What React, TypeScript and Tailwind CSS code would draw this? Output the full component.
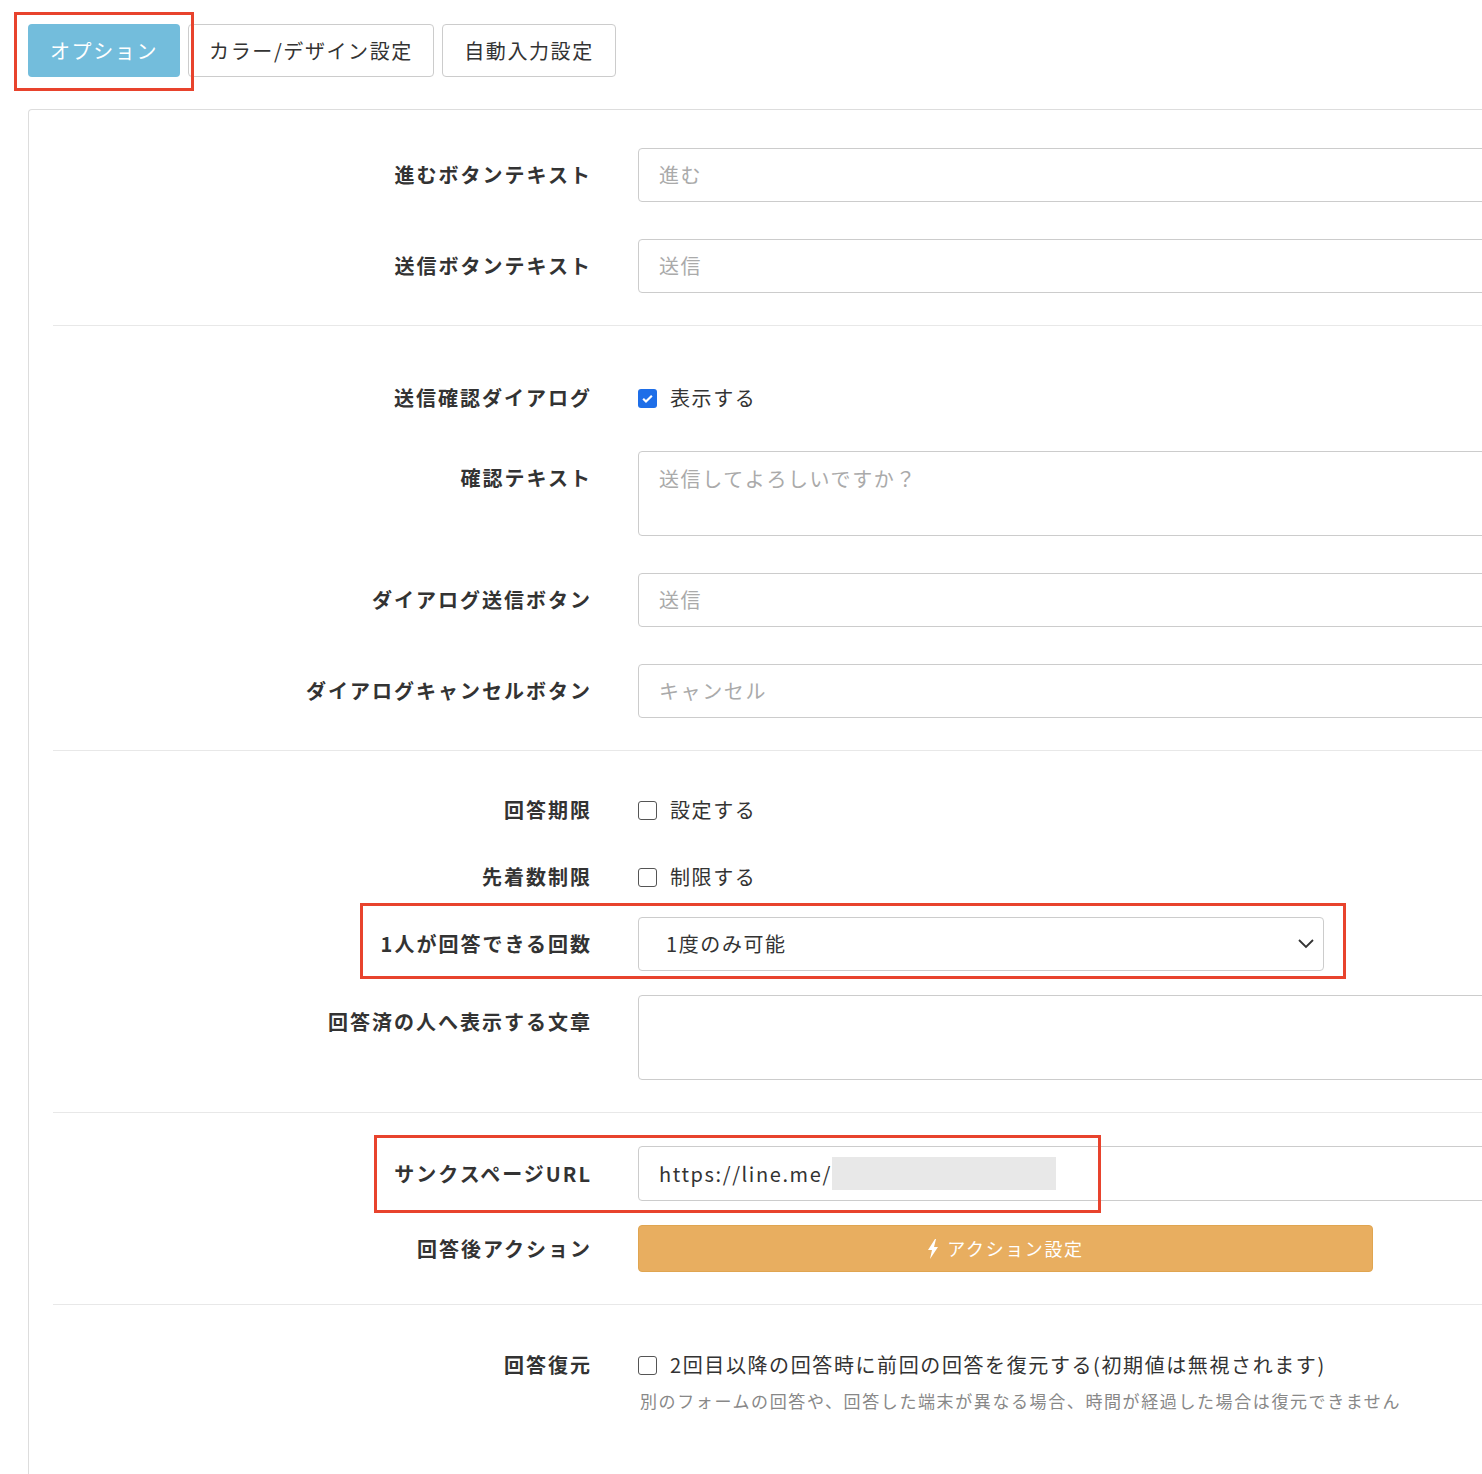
const F = { fontFamily: '"Noto Sans CJK JP", "Noto Sans", sans-serif', letterSpacing: '0.1em' };

function Label({ children, top }: { children: React.ReactNode; top?: boolean }) {
  return (
    <div className={`w-[539px] shrink-0 whitespace-nowrap text-right text-[20px] font-bold tracking-[0.1em] text-[#333] ${top ? 'self-start pt-[12px]' : ''}`} style={{ marginRight: '-0.1em' }}>
      {children}
    </div>
  );
}
function Input({ ph, h = 54, val }: { ph?: string; h?: number; val?: string }) {
  return (
    <div className="ml-[48px] flex-1 rounded-[4px] border border-[#ccc] bg-white px-[20px] text-[20px] text-[#aaa]" style={{ height: h, paddingTop: h > 60 ? 12 : 0, display: 'flex', alignItems: h > 60 ? 'flex-start' : 'center' }}>
      {val ?? ph}
    </div>
  );
}
function Box({ checked }: { checked?: boolean }) {
  return checked ? (
    <span className="flex h-[19px] w-[19px] items-center justify-center rounded-[3px] bg-[#1e6ee8]">
      <svg width="13" height="13" viewBox="0 0 12 12"><path d="M2 6.2l2.6 2.6L10 3.4" stroke="white" strokeWidth="2" fill="none" /></svg>
    </span>
  ) : (
    <span className="h-[19px] w-[19px] rounded-[3px] border-[1.5px] border-[#555] bg-white" />
  );
}
function CheckRow({ label, text, checked, mt }: { label: string; text: string; checked?: boolean; mt: number }) {
  return (
    <div className="flex h-[30px] items-center" style={{ marginTop: mt }}>
      <Label>{label}</Label>
      <div className="ml-[48px] flex items-center gap-[13px] whitespace-nowrap text-[20px] text-[#333]">
        <Box checked={checked} />
        {text}
      </div>
    </div>
  );
}
const Divider = ({ mt }: { mt: number }) => <div className="h-px bg-[#e8e8e8]" style={{ marginTop: mt }} />;

export default function App() {
  return (
    <div className="relative h-[1474px] w-[1482px] overflow-hidden bg-white" style={F}>
      <div className="flex gap-[8px] pl-[28px] pt-[24px]">
        <div className="flex h-[53px] w-[152px] items-center justify-center rounded-[4px] bg-[#73bddc] text-[20px] text-white">オプション</div>
        <div className="flex h-[53px] w-[246px] items-center justify-center rounded-[4px] border border-[#ccc] text-[20px] text-[#333]">カラー/デザイン設定</div>
        <div className="flex h-[53px] w-[174px] items-center justify-center rounded-[4px] border border-[#ccc] text-[20px] text-[#333]">自動入力設定</div>
      </div>
      <div className="ml-[28px] mt-[32px] h-[1400px] w-[1500px] rounded-tl-[4px] border-l border-t border-[#ddd] pl-[24px] pt-[38px]">
        <div className="flex items-center"><Label>進むボタンテキスト</Label><Input ph="進む" /></div>
        <div className="mt-[37px] flex items-center"><Label>送信ボタンテキスト</Label><Input ph="送信" /></div>
        <Divider mt={32} />
        <CheckRow mt={57} label="送信確認ダイアログ" text="表示する" checked />
        <div className="mt-[38px] flex items-center"><Label top>確認テキスト</Label><Input h={85} ph="送信してよろしいですか？" /></div>
        <div className="mt-[37px] flex items-center"><Label>ダイアログ送信ボタン</Label><Input ph="送信" /></div>
        <div className="mt-[37px] flex items-center"><Label>ダイアログキャンセルボタン</Label><Input ph="キャンセル" /></div>
        <Divider mt={32} />
        <CheckRow mt={44} label="回答期限" text="設定する" />
        <CheckRow mt={37} label="先着数制限" text="制限する" />
        <div className="mt-[25px] flex items-center">
          <Label>1人が回答できる回数</Label>
          <div className="ml-[48px] flex h-[54px] w-[686px] items-center justify-between rounded-[4px] border border-[#ccc] pl-[27px] pr-[8px] text-[20px] text-[#333]">
            1度のみ可能
            <svg width="18" height="12" viewBox="0 0 18 12"><path d="M2 2l7 7 7-7" stroke="#333" strokeWidth="1.8" fill="none" /></svg>
          </div>
        </div>
        <div className="mt-[24px] flex items-center"><Label top>回答済の人へ表示する文章</Label><Input h={85} val="" /></div>
        <Divider mt={32} />
        <div className="mt-[33px] flex items-center">
          <Label>サンクスページURL</Label>
          <div className="ml-[48px] flex h-[55px] flex-1 items-center rounded-[4px] border border-[#ccc] pl-[20px] text-[20px] text-[#333]">
            https://line.me/<span className="h-[33px] w-[224px] bg-[#e8e8e8]" />
          </div>
        </div>
        <div className="mt-[24px] flex items-center">
          <Label>回答後アクション</Label>
          <div className="ml-[48px] flex h-[47px] w-[735px] items-center justify-center gap-[8px] rounded-[4px] border border-[#e0a550] bg-[#e8ae60] text-[18px] text-white">
            <svg width="12" height="20" viewBox="0 0 12 20"><path d="M8 0L1 11h4l-2 9 8-12H7l2-8z" fill="white" /></svg>
            アクション設定
          </div>
        </div>
        <Divider mt={32} />
        <CheckRow mt={45} label="回答復元" text="2回目以降の回答時に前回の回答を復元する(初期値は無視されます)" />
        <div className="ml-[587px] mt-[8px] whitespace-nowrap text-[17px] text-[#888]">別のフォームの回答や、回答した端末が異なる場合、時間が経過した場合は復元できません</div>
      </div>
      <div className="absolute left-[14px] top-[12px] h-[79px] w-[180px] border-[3px] border-[#e8432d]" />
      <div className="absolute left-[360px] top-[903px] h-[76px] w-[986px] border-[3px] border-[#e8432d]" />
      <div className="absolute left-[374px] top-[1135px] h-[78px] w-[727px] border-[3px] border-[#e8432d]" />
    </div>
  );
}
